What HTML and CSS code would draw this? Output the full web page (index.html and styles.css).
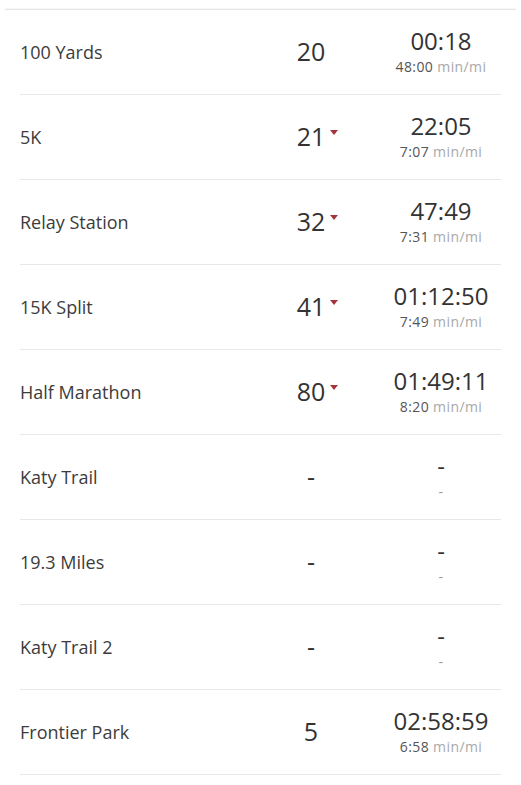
FILE: index.html
```html
<!DOCTYPE html>
<html>
<head>
<meta charset="utf-8">
<link rel="stylesheet" href="styles.css">
</head>
<body>
<div class="list">
  <div class="row">
    <div class="name">100 Yards</div>
    <div class="rank">20</div>
    <div class="time"><div class="total">00:18</div><div class="pace">48:00 <span class="unit">min/mi</span></div></div>
  </div>
  <div class="row">
    <div class="name">5K</div>
    <div class="rank">21<span class="down"></span></div>
    <div class="time"><div class="total">22:05</div><div class="pace">7:07 <span class="unit">min/mi</span></div></div>
  </div>
  <div class="row">
    <div class="name">Relay Station</div>
    <div class="rank">32<span class="down"></span></div>
    <div class="time"><div class="total">47:49</div><div class="pace">7:31 <span class="unit">min/mi</span></div></div>
  </div>
  <div class="row">
    <div class="name">15K Split</div>
    <div class="rank">41<span class="down"></span></div>
    <div class="time"><div class="total">01:12:50</div><div class="pace">7:49 <span class="unit">min/mi</span></div></div>
  </div>
  <div class="row">
    <div class="name">Half Marathon</div>
    <div class="rank">80<span class="down"></span></div>
    <div class="time"><div class="total">01:49:11</div><div class="pace">8:20 <span class="unit">min/mi</span></div></div>
  </div>
  <div class="row">
    <div class="name">Katy Trail</div>
    <div class="rank dash">-</div>
    <div class="time"><div class="total dash">-</div><div class="pace dash">-</div></div>
  </div>
  <div class="row">
    <div class="name">19.3 Miles</div>
    <div class="rank dash">-</div>
    <div class="time"><div class="total dash">-</div><div class="pace dash">-</div></div>
  </div>
  <div class="row">
    <div class="name">Katy Trail 2</div>
    <div class="rank dash">-</div>
    <div class="time"><div class="total dash">-</div><div class="pace dash">-</div></div>
  </div>
  <div class="row">
    <div class="name">Frontier Park</div>
    <div class="rank">5</div>
    <div class="time"><div class="total">02:58:59</div><div class="pace">6:58 <span class="unit">min/mi</span></div></div>
  </div>
</div>
</body>
</html>
```

FILE: styles.css
```css
html, body {
  margin: 0;
  padding: 0;
  background: #ffffff;
}
body {
  font-family: "Open Sans", Lato, sans-serif;
  color: #383838;
}
.list {
  margin: 9px 5px 0 5px;
  border-top: 1px solid #e6e6e6;
  box-shadow: 0 -1px 1px rgba(0,0,0,0.03);
  padding: 0 15px;
}
.row {
  display: grid;
  grid-template-columns: 261px 60px 1fr;
  align-items: center;
  height: 84px;
  border-bottom: 1px solid #e8e8e8;
}
.name {
  font-size: 18px;
  color: #3c3c3c;
}
.rank {
  position: relative;
  text-align: center;
  font-size: 25px;
  color: #333333;
  margin-bottom: 2px;
}
.down {
  position: absolute;
  top: 11px;
  margin-left: 5px;
  width: 0;
  height: 0;
  border-left: 4px solid transparent;
  border-right: 4px solid transparent;
  border-top: 5px solid #a3353b;
}
.time {
  padding-left: 40px;
  text-align: center;
  margin-bottom: 4px;
}
.total {
  font-size: 24px;
  line-height: 33px;
  color: #333333;
}
.pace {
  font-size: 14px;
  line-height: 19px;
  letter-spacing: 0.4px;
  color: #555555;
}
.unit {
  color: #a8a8a8;
}
.pace.dash {
  color: #999999;
}
```
